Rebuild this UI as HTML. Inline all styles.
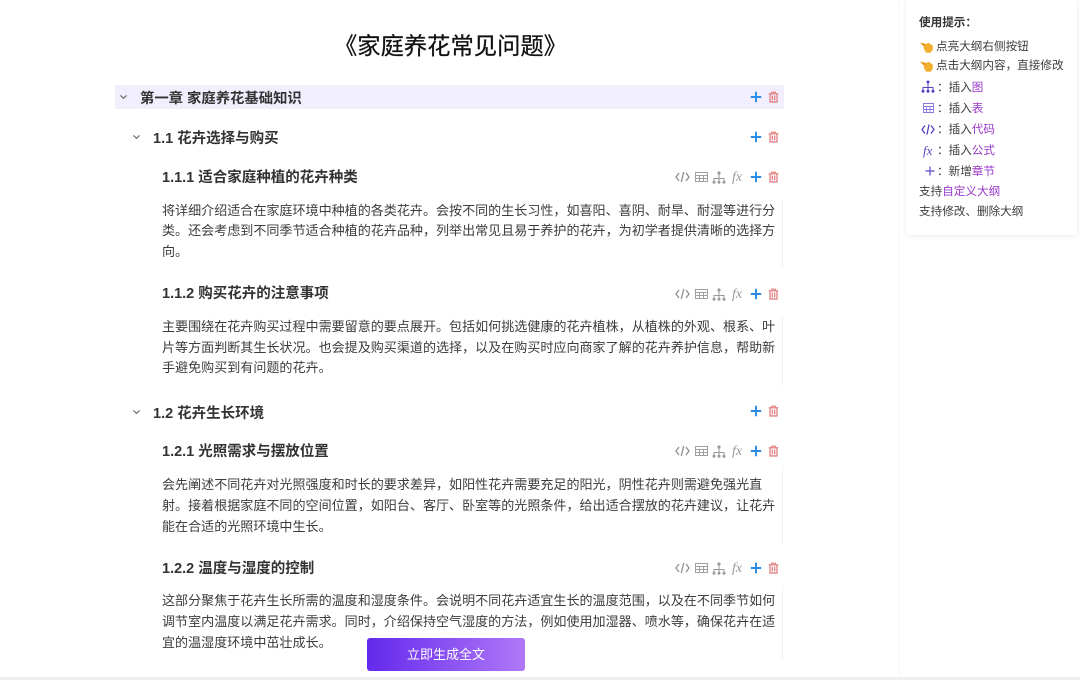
<!DOCTYPE html>
<html lang="zh"><head><meta charset="utf-8"><title>家庭养花常见问题</title>
<style>
*{box-sizing:border-box}
html,body{margin:0;padding:0;width:1080px;height:680px;overflow:hidden;background:#fff}
body{position:relative;font-family:"Liberation Sans","Noto Sans CJK SC",sans-serif;color:#333}
#w{position:absolute;left:0;top:0;width:1080px;height:680px;background:#fff;filter:blur(.35px)}
.a{position:absolute;white-space:nowrap}
.t{font-size:23.3px;line-height:32px;color:#111;left:334px;top:30px;-webkit-text-stroke:.25px #111}
.h{font-size:14.5px;line-height:20px;font-weight:700;color:#333}
.p{font-size:13.05px;line-height:20px;color:#3c3c3c;left:162px}
.s{font-size:11.6px;line-height:16px;color:#3c3c3c}
.s b{font-weight:400;color:#9a38c8}
svg{position:absolute;overflow:visible}
.rule{position:absolute;left:782px;width:1px;background:#eef3f5}
.fx{position:absolute;font:italic 14px "Liberation Serif",serif;color:#999;line-height:14px}
</style></head><body><div id="w">
<svg width="0" height="0" style="position:absolute"><defs>
<symbol id="plus" viewBox="0 0 12 12"><path d="M6 .8v10.4M.8 6h10.4" stroke="#2b8ae6" stroke-width="1.9" fill="none"/></symbol>
<symbol id="del" viewBox="0 0 12 13"><path d="M.8 3h10.4" stroke="#e07f80" stroke-width="1.4" fill="none"/><path d="M4 3V1.2h4V3" stroke="#e07f80" stroke-width="1.2" fill="none"/><path d="M2.2 3.5v8.4h7.6V3.5M4.7 4.8v5.2M7.3 4.8v5.2" stroke="#e07f80" stroke-width="1.4" fill="none"/></symbol>
<symbol id="code" viewBox="0 0 15 12"><path d="M4 2L1 6l3 4M11 2l3 4-3 4M8.7 1L6.3 11" stroke="#8f8f8f" stroke-width="1.3" fill="none"/></symbol>
<symbol id="tab" viewBox="0 0 13 12"><path d="M.5 1.5h12v9H.5zM.5 4.5h12M.5 7.5h12M4.5 4.5v6M8.5 4.5v6" stroke="#a0a0a0" stroke-width="1" fill="none"/></symbol>
<symbol id="tree" viewBox="0 0 14 13"><path d="M7 3v5M2 11V7.5h10V11M7 8v3" stroke="#999" stroke-width="1" fill="none"/><circle cx="7" cy="2" r="1.6" fill="#999"/><circle cx="2" cy="11.3" r="1.5" fill="#999"/><circle cx="7" cy="11.3" r="1.5" fill="#999"/><circle cx="12" cy="11.3" r="1.5" fill="#999"/></symbol>
<symbol id="chev" viewBox="0 0 10 6"><path d="M1.5 1.2L5 4.5l3.5-3.3" stroke="#666" stroke-width="1.3" fill="none"/></symbol>
<symbol id="hand" viewBox="0 0 13 12"><path d="M.3 2.2C.8 1.2 2.5 1.8 6 3L8.5 1.8 12.8 4.5V9L10.5 11.8H6.2L4 8.4 3.6 5.2z" fill="#f3b02e"/><path d="M.3 2.2L5.8 3.6 5 5.2z" fill="#e5881e"/></symbol>
</defs></svg>

<div class="a" style="left:899px;top:0;width:1px;height:680px;background:#f6f6f6"></div>
<div class="a" style="left:0;top:677px;width:1080px;height:3px;background:#f0f0f0"></div>

<div class="a t">《家庭养花常见问题》</div>

<div class="a" style="left:115px;top:85px;width:669px;height:24px;background:#f1effd"></div>
<svg style="left:119px;top:94px" width="9" height="6"><use href="#chev"/></svg>
<div class="a h" style="left:140px;top:89px;font-size:14.35px">第一章 家庭养花基础知识</div>
<svg style="left:750px;top:91px" width="12" height="12"><use href="#plus"/></svg>
<svg style="left:768px;top:91px" width="11" height="12"><use href="#del"/></svg>

<svg style="left:132px;top:134px" width="9" height="6"><use href="#chev"/></svg>
<div class="a h" style="left:153px;top:129px">1.1 花卉选择与购买</div>
<svg style="left:750px;top:131px" width="12" height="12"><use href="#plus"/></svg>
<svg style="left:768px;top:131px" width="11" height="12"><use href="#del"/></svg>

<div class="a h" style="left:162px;top:168px">1.1.1 适合家庭种植的花卉种类</div>
<svg style="left:675px;top:171px" width="15" height="12"><use href="#code"/></svg>
<svg style="left:695px;top:171px" width="13" height="12"><use href="#tab"/></svg>
<svg style="left:712px;top:171px" width="14" height="13"><use href="#tree"/></svg>
<div class="fx" style="left:732px;top:171px">fx</div>
<svg style="left:750px;top:171px" width="12" height="12"><use href="#plus"/></svg>
<svg style="left:768px;top:171px" width="11" height="12"><use href="#del"/></svg>
<div class="rule" style="top:199px;height:70px"></div>
<div class="a p" style="top:201px">将详细介绍适合在家庭环境中种植的各类花卉。会按不同的生长习性，如喜阳、喜阴、耐旱、耐湿等进行分</div>
<div class="a p" style="top:221px">类。还会考虑到不同季节适合种植的花卉品种，列举出常见且易于养护的花卉，为初学者提供清晰的选择方</div>
<div class="a p" style="top:242px">向。</div>

<div class="a h" style="left:162px;top:284px">1.1.2 购买花卉的注意事项</div>
<svg style="left:675px;top:288px" width="15" height="12"><use href="#code"/></svg>
<svg style="left:695px;top:288px" width="13" height="12"><use href="#tab"/></svg>
<svg style="left:712px;top:288px" width="14" height="13"><use href="#tree"/></svg>
<div class="fx" style="left:732px;top:288px">fx</div>
<svg style="left:750px;top:288px" width="12" height="12"><use href="#plus"/></svg>
<svg style="left:768px;top:288px" width="11" height="12"><use href="#del"/></svg>
<div class="rule" style="top:316px;height:70px"></div>
<div class="a p" style="top:317px">主要围绕在花卉购买过程中需要留意的要点展开。包括如何挑选健康的花卉植株，从植株的外观、根系、叶</div>
<div class="a p" style="top:338px">片等方面判断其生长状况。也会提及购买渠道的选择，以及在购买时应向商家了解的花卉养护信息，帮助新</div>
<div class="a p" style="top:358px">手避免购买到有问题的花卉。</div>

<svg style="left:132px;top:409px" width="9" height="6"><use href="#chev"/></svg>
<div class="a h" style="left:153px;top:404px">1.2 花卉生长环境</div>
<svg style="left:750px;top:405px" width="12" height="12"><use href="#plus"/></svg>
<svg style="left:768px;top:405px" width="11" height="12"><use href="#del"/></svg>

<div class="a h" style="left:162px;top:442px">1.2.1 光照需求与摆放位置</div>
<svg style="left:675px;top:445px" width="15" height="12"><use href="#code"/></svg>
<svg style="left:695px;top:445px" width="13" height="12"><use href="#tab"/></svg>
<svg style="left:712px;top:445px" width="14" height="13"><use href="#tree"/></svg>
<div class="fx" style="left:732px;top:445px">fx</div>
<svg style="left:750px;top:445px" width="12" height="12"><use href="#plus"/></svg>
<svg style="left:768px;top:445px" width="11" height="12"><use href="#del"/></svg>
<div class="rule" style="top:466px;height:78px"></div>
<div class="a p" style="top:475px">会先阐述不同花卉对光照强度和时长的要求差异，如阳性花卉需要充足的阳光，阴性花卉则需避免强光直</div>
<div class="a p" style="top:496px">射。接着根据家庭不同的空间位置，如阳台、客厅、卧室等的光照条件，给出适合摆放的花卉建议，让花卉</div>
<div class="a p" style="top:517px">能在合适的光照环境中生长。</div>

<div class="a h" style="left:162px;top:559px">1.2.2 温度与湿度的控制</div>
<svg style="left:675px;top:562px" width="15" height="12"><use href="#code"/></svg>
<svg style="left:695px;top:562px" width="13" height="12"><use href="#tab"/></svg>
<svg style="left:712px;top:562px" width="14" height="13"><use href="#tree"/></svg>
<div class="fx" style="left:732px;top:562px">fx</div>
<svg style="left:750px;top:562px" width="12" height="12"><use href="#plus"/></svg>
<svg style="left:768px;top:562px" width="11" height="12"><use href="#del"/></svg>
<div class="rule" style="top:586px;height:74px"></div>
<div class="a p" style="top:591px">这部分聚焦于花卉生长所需的温度和湿度条件。会说明不同花卉适宜生长的温度范围，以及在不同季节如何</div>
<div class="a p" style="top:612px">调节室内温度以满足花卉需求。同时，介绍保持空气湿度的方法，例如使用加湿器、喷水等，确保花卉在适</div>
<div class="a p" style="top:633px">宜的温湿度环境中茁壮成长。</div>

<div class="a" style="left:367px;top:638px;width:158px;height:33px;border-radius:3px;background:linear-gradient(90deg,#6429ec,#b078f8);color:#fff;font-size:13px;line-height:33px;text-align:center">立即生成全文</div>

<div class="a" style="left:906px;top:0;width:171px;height:235px;background:#fff;box-shadow:0 1px 6px rgba(0,0,0,.09);border-radius:0 0 3px 3px"></div>
<div class="a s" style="left:919px;top:15px;font-weight:700;color:#333">使用提示：</div>
<svg style="left:920px;top:41px" width="13" height="12"><use href="#hand"/></svg>
<div class="a s" style="left:936px;top:39px">点亮大纲右侧按钮</div>
<svg style="left:920px;top:60px" width="13" height="12"><use href="#hand"/></svg>
<div class="a s" style="left:936px;top:58px">点击大纲内容，直接修改</div>

<svg style="left:921px;top:80px" width="14" height="13"><path d="M7 3v5M2 11V7.5h10V11M7 8v3" stroke="#5b3fc0" stroke-width="1" fill="none"/><circle cx="7" cy="2" r="1.5" fill="#5b3fc0"/><circle cx="2" cy="11.3" r="1.5" fill="#5b3fc0"/><circle cx="7" cy="11.3" r="1.5" fill="#5b3fc0"/><circle cx="12" cy="11.3" r="1.5" fill="#5b3fc0"/></svg>
<div class="a s" style="left:937px;top:80px">：插入<b>图</b></div>

<svg style="left:923px;top:103px" width="11" height="10"><path d="M.5.5h10v9H.5zM.5 3.5h10M.5 6.5h10M3.5 3.5v6M7 3.5v6" stroke="#8a78e0" stroke-width=".9" fill="none"/></svg>
<div class="a s" style="left:937px;top:101px">：插入<b>表</b></div>

<svg style="left:921px;top:124px" width="14" height="11"><path d="M4 1.5L1 5.5l3 4M10 1.5l3 4-3 4M8 .5L6 10.5" stroke="#5b3fc0" stroke-width="1.3" fill="none"/></svg>
<div class="a s" style="left:937px;top:122px">：插入<b>代码</b></div>

<div class="fx" style="left:923px;top:144px;color:#5b3fc0;font-size:13px">fx</div>
<div class="a s" style="left:937px;top:143px">：插入<b>公式</b></div>

<svg style="left:925px;top:166px" width="10" height="10"><path d="M5 .5v9M.5 5h9" stroke="#5b4bc4" stroke-width="1.2" fill="none"/></svg>
<div class="a s" style="left:937px;top:164px">：新增<b>章节</b></div>

<div class="a s" style="left:919px;top:184px">支持<b>自定义大纲</b></div>
<div class="a s" style="left:919px;top:204px">支持修改、删除大纲</div>
</div></body></html>
